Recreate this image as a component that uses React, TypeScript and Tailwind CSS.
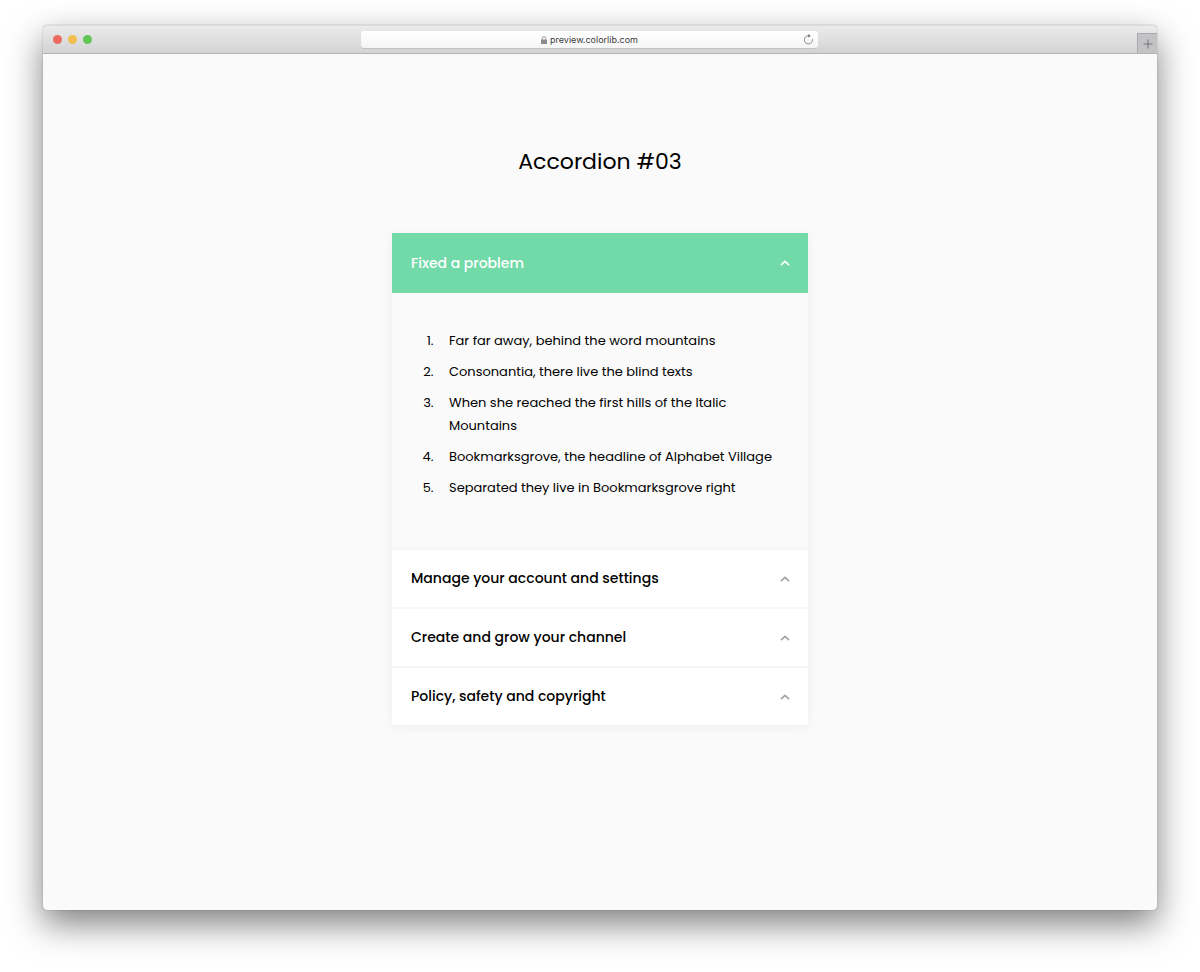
import React, { useState } from 'react';

interface Section {
    id: number;
    title: string;
    items: string[];
}

const SECTIONS: Section[] = [
    {
        id: 1,
        title: 'Fixed a problem',
        items: [
            'Far far away, behind the word mountains',
            'Consonantia, there live the blind texts',
            'When she reached the first hills of the Italic Mountains',
            'Bookmarksgrove, the headline of Alphabet Village',
            'Separated they live in Bookmarksgrove right',
        ],
    },
    { id: 2, title: 'Manage your account and settings', items: [] },
    { id: 3, title: 'Create and grow your channel', items: [] },
    { id: 4, title: 'Policy, safety and copyright', items: [] },
];

const ChevronUp: React.FC<{ className?: string }> = ({ className }) => (
    <svg viewBox="0 0 10 6" className={className} fill="none" stroke="currentColor" strokeWidth="1.6" aria-hidden="true">
        <path d="M0.9 5.2 5 1.3l4.1 3.9" />
    </svg>
);

const BrowserBar: React.FC = () => (
    <header className="relative flex h-[29px] items-end justify-center rounded-t-[4px] border-b border-[#b4b4b6] bg-linear-to-b from-[#ececed] to-[#d3d3d5] pb-[5px] shadow-[inset_0_1px_0_#dcdcdd]">
        <div className="absolute top-[10px] left-[10px] flex gap-[6px]">
            <span className="size-[9px] rounded-full bg-[#ec6a5f]" />
            <span className="size-[9px] rounded-full bg-[#f4bf50]" />
            <span className="size-[9px] rounded-full bg-[#61c655]" />
        </div>
        <div className="relative mr-[21px] flex h-[17px] w-[41%] items-center justify-center gap-[3px] rounded-[3px] bg-linear-to-b from-white to-[#f5f5f6] shadow-[0_1px_0_#c2c2c4]">
            <svg viewBox="0 0 6 8" className="h-2 w-[6px]" aria-hidden="true">
                <path d="M1.3 3.8V2.3a1.7 1.7 0 0 1 3.4 0v1.5" fill="none" stroke="#929292" strokeWidth="0.9" />
                <rect y="3.5" width="6" height="4.5" rx="0.6" fill="#8b8b8b" />
            </svg>
            <span className="font-['Inter',sans-serif] text-[9px] leading-4 text-[#3c3c3c]">preview.colorlib.com</span>
            <button type="button" aria-label="Reload" className="absolute right-1 flex">
                <svg viewBox="0 0 11 11" className="size-[11px]" aria-hidden="true">
                    <path d="M5.8 1.7A4.1 4.1 0 1 0 9.5 5.2" fill="none" stroke="#7d7d7d" strokeWidth="0.9" />
                    <path d="M5.2 0v3.6L7.8 1.9z" fill="#6f6f6f" />
                </svg>
            </button>
        </div>
        <button type="button" aria-label="New tab" className="absolute right-0 bottom-0 flex size-[20px] items-center justify-center border-t border-l border-[#a9a9ab] bg-[#c3c3c5]">
            <svg viewBox="0 0 10 10" className="size-[10px]" aria-hidden="true">
                <path d="M5 0.5v9M0.5 5h9" stroke="#737375" strokeWidth="1" />
            </svg>
        </button>
    </header>
);

const App: React.FC = () => {
    const [openId, setOpenId] = useState<number | null>(1);

    return (
        <div className="flex min-h-screen flex-col bg-white px-[43px] pt-[25px] pb-[62px] font-[Poppins,Inter,sans-serif] text-black">
            <div className="flex grow flex-col rounded-[4px] bg-[#fafafa] shadow-[0_0_1px_rgba(0,0,0,0.6),0_14px_34px_rgba(0,0,0,0.5)]">
                <BrowserBar />
                <main className="px-4 pt-[93px] pb-16">
                    <h1 className="text-center text-[22px] leading-[30px]">Accordion #03</h1>

                    <div className="mx-auto mt-14 max-w-[416px] shadow-[0_2px_10px_rgba(0,0,0,0.05)]">
                        {SECTIONS.map(section => {
                            const isOpen = openId === section.id;
                            return (
                                <section key={section.id} className="border-b-2 border-[#f6f6f6] last:border-b-0">
                                    <h2>
                                        <button
                                            type="button"
                                            aria-expanded={isOpen}
                                            aria-controls={`panel-${section.id}`}
                                            onClick={() => setOpenId(isOpen ? null : section.id)}
                                            className={`flex w-full items-center justify-between pr-[18px] pl-[19px] text-left text-[14px] font-medium ${isOpen ? 'h-[60px] bg-[#72daa9] text-white' : 'h-[57px] bg-white text-black'}`}
                                        >
                                            {section.title}
                                            <ChevronUp className={`h-[6px] w-[10px] ${isOpen ? 'text-white' : 'text-[#a3a3a3]'}`} />
                                        </button>
                                    </h2>
                                    {isOpen && (
                                        <div id={`panel-${section.id}`} className="px-[19px] pt-9 pb-[41px]">
                                            <ol className="list-decimal pl-[26px] text-[13px] leading-[23px]">
                                                {section.items.map(item => (
                                                    <li key={item} className="mb-2 pl-3">{item}</li>
                                                ))}
                                            </ol>
                                        </div>
                                    )}
                                </section>
                            );
                        })}
                    </div>
                </main>
            </div>
        </div>
    );
};

export default App;
